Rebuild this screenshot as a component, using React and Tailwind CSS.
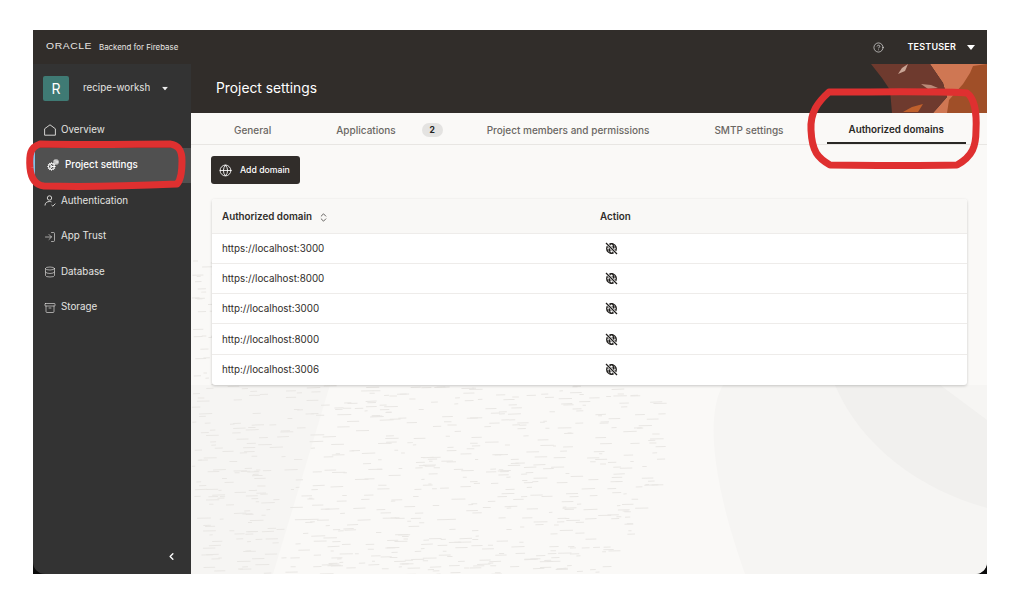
import React from 'react';
import { ChevronLeft, ChevronsUpDown, CircleHelp, Database, Globe, LogIn, Archive, Cog } from 'lucide-react';

const domains = [
  'https://localhost:3000',
  'https://localhost:8000',
  'http://localhost:3000',
  'http://localhost:8000',
  'http://localhost:3006',
];

const Caret = ({ className }) => (
  <svg width="8" height="5" viewBox="0 0 8 5" className={className}>
    <path d="M0 0h8L4 5z" fill="currentColor" />
  </svg>
);

const HomeIcon = () => (
  <svg width="12" height="12" viewBox="0 0 12 12" fill="none" stroke="currentColor" strokeWidth="0.9">
    <path d="M.6 4.8L6 .8l5.4 4v6.4H.6z" />
  </svg>
);

const UserCheckIcon = () => (
  <svg width="12" height="12" viewBox="0 0 12 12" fill="none" stroke="currentColor" strokeWidth="0.9">
    <circle cx="5.5" cy="3" r="2.2" />
    <path d="M1 10.5c0-2.6 2-4 4.5-4 .8 0 1.4.1 2 .4" />
    <path d="M7.5 10l1.4 1.2 2.4-2.6" />
  </svg>
);

const GearsIcon = () => (
  <span className="relative block w-[12px] h-[12px]">
    <Cog size={9} strokeWidth={2.6} className="absolute left-0 bottom-0" />
    <Cog size={6} strokeWidth={2.6} className="absolute right-0 top-0" />
  </span>
);

const GlobeOffIcon = () => (
  <svg width="13" height="13" viewBox="0 0 13 13" fill="none" stroke="#1f1d1b" strokeWidth="1.3">
    <circle cx="6.5" cy="6.5" r="4.8" />
    <ellipse cx="6.5" cy="6.5" rx="2.1" ry="4.8" />
    <path d="M2 5h9M2 8h9" strokeWidth="1" />
    <path d="M1.2 1.2l10.8 10.8" stroke="#fff" strokeWidth="2.6" />
    <path d="M1 1l11 11" strokeWidth="1.2" />
  </svg>
);

const navItems = [
  { label: 'Overview', icon: <HomeIcon /> },
  { label: 'Project settings', icon: <GearsIcon />, active: true },
  { label: 'Authentication', icon: <UserCheckIcon /> },
  { label: 'App Trust', icon: <LogIn size={12} strokeWidth={1.3} /> },
  { label: 'Database', icon: <Database size={12} strokeWidth={1.3} /> },
  { label: 'Storage', icon: <Archive size={12} strokeWidth={1.3} /> },
];

// speckled dashes of the page background, same every run
const makeDashes = () => {
  const out = [];
  let seed = 12345;
  const rnd = () => {
    seed = (seed * 1103515245 + 12345) & 0x7fffffff;
    return seed / 0x7fffffff;
  };
  for (let i = 0; i < 1200; i++) {
    const x = 191 + rnd() * 475;
    const y = 255 + rnd() * 320;
    const over = y > 450 ? (y - 450) * (y - 450) * 0.004 : 0;
    if (x > 660 - over) continue;
    if (y < 385 && x > 212) continue;
    out.push({ x, y, w: 3 + rnd() * 11 });
  }
  return out;
};
const dashes = makeDashes();

const PageBackground = () => (
  <svg className="absolute inset-0 w-full h-full" viewBox="191 113 796 461" preserveAspectRatio="none">
    <path d="M191 385H330L273 574H191z" fill="#f6f5f3" />
    <path d="M723 385C708 410 708 470 745 574H987V385z" fill="#f6f5f3" />
    <path d="M835 385C860 445 920 490 987 508V420L940 385z" fill="#f1f0ee" />
    {dashes.map((d, i) => (
      <rect key={i} x={d.x} y={d.y} width={d.w} height="1" fill="#e9e7e4" transform={`rotate(-1.5 ${d.x} ${d.y})`} />
    ))}
  </svg>
);

const HeaderArt = () => (
  <svg className="absolute right-0 top-0" width="117" height="49" viewBox="870 64 117 49">
    <path d="M930 64H987V113H933L947 97 943 83z" fill="#cf7753" />
    <path d="M973 66L987 64V113H947L949 100 963 84 970 73z" fill="#a04f28" />
    <path d="M871 64H930L943 83 947 97 933 113H892L890 90 882 78z" fill="#6e3a2e" />
    <path d="M898 74L902 68 908 64 905 71z" fill="#c9a596" />
    <path d="M921 84L931 85 938 88 928 89z" fill="#b98a78" />
    <path d="M903 112L912 107 923 104 918 112z" fill="#c0602c" />
  </svg>
);

// red marker annotations drawn on top of the screenshot
const Annotations = () => (
  <svg className="absolute inset-0 pointer-events-none" width="1017" height="603" viewBox="0 0 1017 603" fill="none" stroke="#df3030" strokeLinejoin="round">
    <path strokeWidth="7" d="M40 144C85 145 140 144 170 144 179 145 182 151 182 161 182 171 181 180 177 184 130 186 80 187 44 186 35 185 31 178 30 168 29 155 30 147 40 144z" />
    <path strokeWidth="7" d="M829 92C880 92 950 91 967 93 974 98 977 112 976 130 976 146 973 156 957 165 900 166 850 165 830 165 818 158 812 152 811 130 810 112 818 102 829 92z" />
  </svg>
);

const App = () => {
  return (
    <div className="relative w-[1017px] h-[603px] bg-white overflow-hidden font-['Inter',sans-serif] pl-[33px] pr-[30px] pt-[30px] pb-[29px]">
      <div className="h-full bg-[#0b0b0b] flex flex-col">
        <header className="h-[34px] shrink-0 bg-[#312d2a] flex items-center pl-[13px] pr-[12px] text-[#e8e6e3]">
          <span className="w-[53px] text-[9px] tracking-[0.5px] font-light font-['Liberation_Sans',sans-serif] scale-x-[1.15] origin-left">ORACLE</span>
          <span className="text-[7.9px] pt-[1px]">Backend for Firebase</span>
          <CircleHelp size={11} strokeWidth={1.3} className="ml-auto mr-[23px] text-white" />
          <span className="text-[9px] font-semibold tracking-[0.2px] text-white mr-[11px]">TESTUSER</span>
          <Caret className="text-white" />
        </header>
        <div className="flex flex-1 min-h-0">
          <aside className="w-[158px] shrink-0 bg-[#333333] rounded-bl-[12px] flex flex-col text-[#e4e3e1]">
            <div className="h-[48px] shrink-0 flex items-center pl-[10px]">
              <div className="w-[26px] h-[25px] rounded-[2px] bg-[#3f7a74] flex items-center justify-center text-white text-[14px]">R</div>
              <span className="ml-[14px] w-[67px] overflow-hidden whitespace-nowrap text-[9.8px]">recipe-workshop</span>
              <Caret className="ml-[11px] text-[#eee] scale-75" />
            </div>
            <nav className="flex flex-col">
              {navItems.map((item) => (
                <div
                  key={item.label}
                  className={`h-[35.5px] flex items-center gap-[5px] text-[9.8px] ${
                    item.active
                      ? 'bg-[#505050] border-l-2 border-[#7cc4ea] pl-[12px] text-white font-medium gap-[6px]'
                      : 'pl-[11px] pt-[1px]'
                  }`}
                >
                  <span className="w-[12px] flex justify-center">{item.icon}</span>
                  {item.label}
                </div>
              ))}
            </nav>
            <div className="mt-auto flex justify-end pr-[14px] pb-[12px]">
              <ChevronLeft size={11} strokeWidth={3} className="text-white" />
            </div>
          </aside>
          <main className="flex-1 min-w-0 flex flex-col bg-[#faf9f7] rounded-br-[12px] overflow-hidden">
            <div className="relative h-[49px] shrink-0 bg-[#312d2a] flex items-center pl-[25px] text-white text-[13.8px]">
              Project settings
              <HeaderArt />
            </div>
            <div className="relative flex-1 min-h-0">
              <PageBackground />
              <div className="relative">
                <div className="h-[32px] border-b border-[#e8e6e3] flex pl-[21px] text-[10px] font-medium text-[#6a6763] whitespace-nowrap">
                  <div className="h-full px-[22px] pt-[3px] flex items-center">General</div>
                  <div className="h-full ml-[21px] pl-[22px] pt-[3px] flex items-center">
                    Applications
                    <span className="ml-[26px] w-[21px] h-[14px] rounded-full bg-[#e4e3e1] text-[#222] text-[8.5px] font-bold flex items-center justify-center">2</span>
                  </div>
                  <div className="h-full ml-[22px] px-[22px] pt-[3px] flex items-center">Project members and permissions</div>
                  <div className="h-full ml-[21px] px-[22px] pt-[3px] flex items-center">SMTP settings</div>
                  <div className="h-full ml-[21px] px-[22px] pt-[5px] flex items-center text-[9.8px] text-[#2a2825] font-semibold border-b-2 border-[#2a2825]">Authorized domains</div>
                </div>
                <div className="px-[20px] pt-[11px]">
                  <button className="h-[28px] w-[89px] rounded-[3px] bg-[#312d2a] text-white text-[8.7px] font-medium flex items-center gap-[8px] pl-[8px]">
                    <Globe size={13} strokeWidth={1.6} />
                    <span className="pt-[2px]">Add domain</span>
                  </button>
                  <div className="mt-[15px] ml-[1px] w-[755px] rounded-[3px] bg-white shadow-[0_1px_3px_rgba(0,0,0,0.2)] overflow-hidden text-[9.8px] text-[#2f2c29]">
                    <div className="h-[34.5px] pt-[3px] flex items-center bg-[#f9f8f6] border-b border-[#eeecea] font-semibold">
                      <div className="w-[388px] pl-[10px] flex items-center gap-[6px]">
                        Authorized domain
                        <ChevronsUpDown size={11} strokeWidth={1.6} />
                      </div>
                      <div>Action</div>
                    </div>
                    {domains.map((domain) => (
                      <div key={domain} className="h-[30.3px] flex items-center border-b last:border-b-0 border-[#eeecea]">
                        <div className="w-[388px] pl-[10px] pt-[2px]">{domain}</div>
                        <div className="pl-[5px]"><GlobeOffIcon /></div>
                      </div>
                    ))}
                  </div>
                </div>
              </div>
            </div>
          </main>
        </div>
      </div>
      <Annotations />
    </div>
  );
};

export default App;
